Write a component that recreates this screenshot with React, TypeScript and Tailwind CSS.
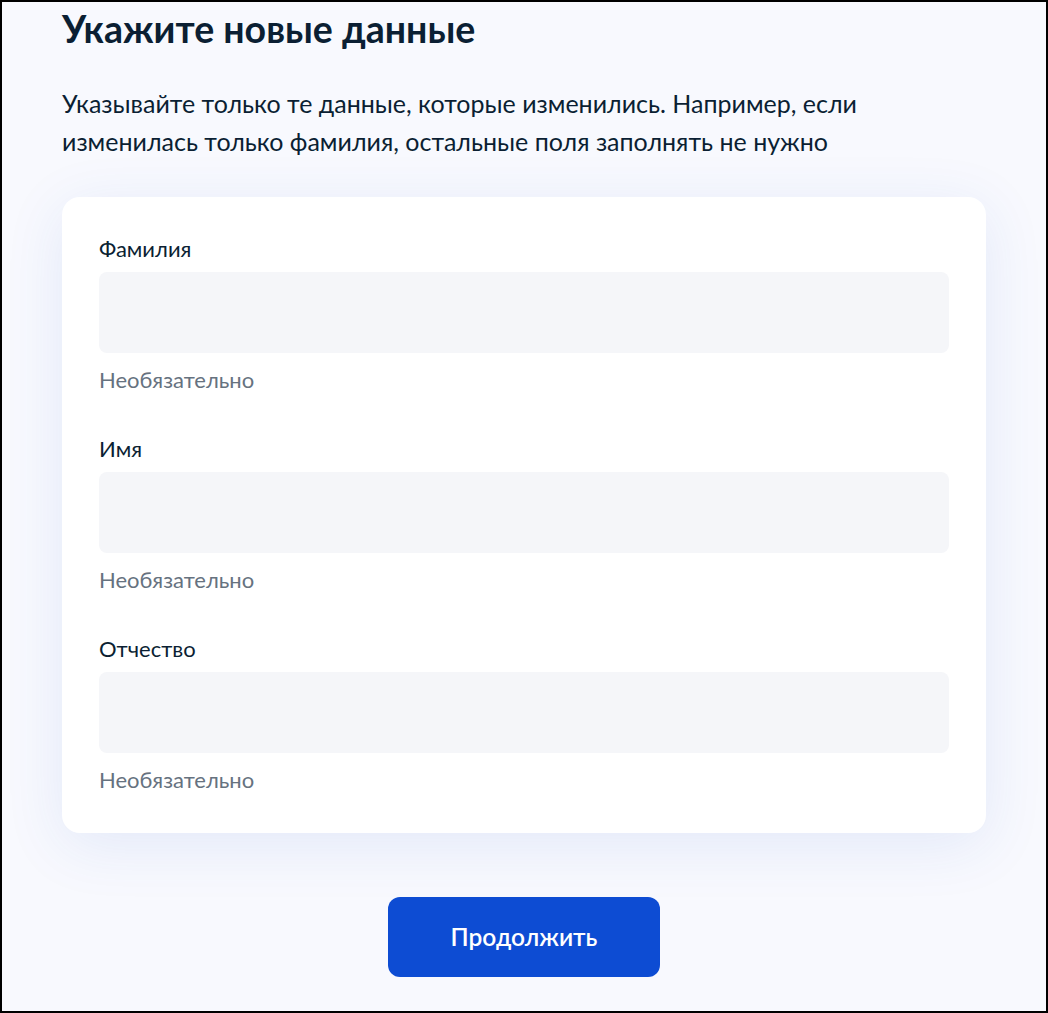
import React from "react";

const fields = ["Фамилия", "Имя", "Отчество"];

function Field({ label }: { label: string }) {
  return (
    <div className="flex flex-col">
      <label className="text-[22px] leading-[24px] text-[#0b1f33]">{label}</label>
      <input
        type="text"
        className="mt-[11px] h-[81px] w-full rounded-[8px] bg-[#f5f6f9] px-4 text-[20px] outline-none"
      />
      <span className="mt-[15px] text-[22px] leading-[24px] text-[#66727f]">Необязательно</span>
    </div>
  );
}

export default function App() {
  return (
    <div className="h-[1013px] w-full border-2 border-black bg-[#f8f9fe] font-['Lato',sans-serif] text-[#0b1f33]">
      <div className="px-[60px] pt-[5px]">
        {/* Heading */}
        <h1 className="text-[37.5px] leading-[44px] font-bold">Укажите новые данные</h1>
        <p className="mt-[33px] text-[25px] leading-[38px]">
          Указывайте только те данные, которые изменились. Например, если
          <br />
          изменилась только фамилия, остальные поля заполнять не нужно
        </p>

        {/* Form card */}
        <div className="mt-[37px] flex flex-col gap-[45px] rounded-[18px] bg-white px-[37px] pt-[40px] pb-[41px] shadow-[0_12px_60px_rgba(43,89,196,0.1)]">
          {fields.map((f) => (
            <Field key={f} label={f} />
          ))}
        </div>

        <div className="mt-[64px] flex justify-center">
          <button className="h-[80px] w-[272px] rounded-[12px] bg-[#0d4cd3] text-[24.5px] font-semibold text-white">
            Продолжить
          </button>
        </div>
      </div>
    </div>
  );
}
